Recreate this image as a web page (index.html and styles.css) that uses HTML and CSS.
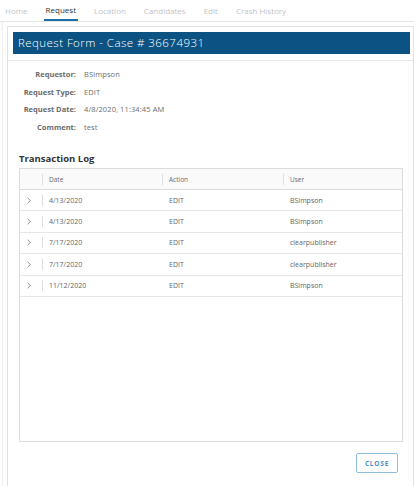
FILE: index.html
```html
<!DOCTYPE html>
<html>
	<head>
		<meta charset="UTF-8">
		<title>Request Form</title>
		<link rel="stylesheet" href="styles.css">
	</head>
	<body>
		<div class="tabs">
			<span class="tab">Home</span>
			<span class="tab active">Request</span>
			<span class="tab">Location</span>
			<span class="tab">Candidates</span>
			<span class="tab">Edit</span>
			<span class="tab">Crash History</span>
		</div>
		<div class="page">
			<div class="card">
				<div class="title">Request Form - Case # 36674931</div>
				<div class="content">
					<div class="form">
						<span class="label">Requestor:</span><span class="value">BSimpson</span>
						<span class="label">Request Type:</span><span class="value">EDIT</span>
						<span class="label">Request Date:</span><span class="value">4/8/2020, 11:34:45 AM</span>
						<span class="label">Comment:</span><span class="value">test</span>
					</div>
					<h3 class="log-title">Transaction Log</h3>
					<div class="grid">
						<div class="row head">
							<div class="cell exp"></div>
							<div class="cell sep">Date</div>
							<div class="cell sep">Action</div>
							<div class="cell sep">User</div>
						</div>
						<div class="row">
							<div class="cell exp"><svg width="6" height="7" viewBox="0 0 6 7"><polyline points="1.5,0.8 4.5,3.5 1.5,6.2" fill="none" stroke="#8a8a8a" stroke-width="0.9"/></svg></div>
							<div class="cell first">4/13/2020</div>
							<div class="cell">EDIT</div>
							<div class="cell">BSimpson</div>
						</div>
						<div class="row">
							<div class="cell exp"><svg width="6" height="7" viewBox="0 0 6 7"><polyline points="1.5,0.8 4.5,3.5 1.5,6.2" fill="none" stroke="#8a8a8a" stroke-width="0.9"/></svg></div>
							<div class="cell first">4/13/2020</div>
							<div class="cell">EDIT</div>
							<div class="cell">BSimpson</div>
						</div>
						<div class="row">
							<div class="cell exp"><svg width="6" height="7" viewBox="0 0 6 7"><polyline points="1.5,0.8 4.5,3.5 1.5,6.2" fill="none" stroke="#8a8a8a" stroke-width="0.9"/></svg></div>
							<div class="cell first">7/17/2020</div>
							<div class="cell">EDIT</div>
							<div class="cell">clearpublisher</div>
						</div>
						<div class="row">
							<div class="cell exp"><svg width="6" height="7" viewBox="0 0 6 7"><polyline points="1.5,0.8 4.5,3.5 1.5,6.2" fill="none" stroke="#8a8a8a" stroke-width="0.9"/></svg></div>
							<div class="cell first">7/17/2020</div>
							<div class="cell">EDIT</div>
							<div class="cell">clearpublisher</div>
						</div>
						<div class="row">
							<div class="cell exp"><svg width="6" height="7" viewBox="0 0 6 7"><polyline points="1.5,0.8 4.5,3.5 1.5,6.2" fill="none" stroke="#8a8a8a" stroke-width="0.9"/></svg></div>
							<div class="cell first">11/12/2020</div>
							<div class="cell">EDIT</div>
							<div class="cell">BSimpson</div>
						</div>
					</div>
					<div class="footer">
						<button class="close">CLOSE</button>
					</div>
				</div>
			</div>
		</div>
	</body>
</html>
```

FILE: styles.css
```css
body{
	margin: 0;
	font-family: "Open Sans", "Noto Sans", sans-serif;
	background: #fff;
	height: 486px;
	overflow: hidden;
}
.tabs{
	display: flex;
	gap: 14px;
	height: 21px;
	padding-left: 3px;
	border-bottom: 1px solid #e6e6e6;
}
.tab{
	padding: 0 2px;
	font-size: 8px;
	line-height: 21px;
	color: #c4c4c4;
	box-sizing: border-box;
	height: 21px;
}
.tab.active{
	color: #333;
	border-bottom: 2px solid #1b6fa8;
	line-height: 20px;
}
.page{
	margin-left: 2px;
	border-left: 1px solid #eee;
	padding-top: 4px;
	height: 470px;
}
.card{
	margin-left: 4px;
	width: 405px;
	border: 1px solid #e2e2e2;
	border-bottom: none;
	height: 480px;
}
.title{
	margin: 5px 3px 0 5px;
	height: 22px;
	background: #0c5383;
	color: #fff;
	font-size: 11.5px;
	font-weight: 300;
	line-height: 22px;
	padding-left: 5px;
	letter-spacing: 0.45px;
}
.content{
	margin-top: 6px;
	border-top: 1px solid #e8e8e8;
}
.form{
	display: grid;
	grid-template-columns: 68px 1fr;
	column-gap: 8px;
	grid-auto-rows: 17.5px;
	padding-top: 5px;
	font-size: 7.5px;
	line-height: 17.5px;
}
.label{
	text-align: right;
	font-weight: bold;
	color: #6b6b6b;
}
.value{
	color: #6e6e6e;
	letter-spacing: 0.1px;
}
.log-title{
	margin: 16px 0 2px 11px;
	font-size: 9.5px;
	line-height: 14px;
	font-weight: bold;
	color: #333;
}
.grid{
	margin-left: 11px;
	width: 382px;
	height: 272px;
	border: 1px solid #dcdcdc;
}
.row{
	display: grid;
	grid-template-columns: 22px 120px 121px 1fr;
	height: 20.4px;
	border-bottom: 1px solid #e6e6e6;
	font-size: 7px;
	color: #666;
	align-items: center;
}
.row.head{
	height: 20px;
	background: #fafafa;
	border-bottom: 1px solid #dcdcdc;
	font-size: 6.5px;
	color: #6a6a6a;
}
.cell{
	padding-left: 7px;
	height: 11px;
	line-height: 11px;
}
.cell.exp{
	padding-left: 6px;
	display: flex;
	align-items: center;
}
.cell.sep,
.cell.first{
	border-left: 1px solid #dedede;
	padding-left: 6px;
}
.footer{
	display: flex;
	justify-content: flex-end;
	padding: 11px 15px 0 0;
}
.close{
	width: 42px;
	height: 20px;
	padding: 0;
	background: #fff;
	border: 1px solid #8fbedc;
	border-radius: 2px;
	color: #4f90be;
	font-family: "Open Sans", "Noto Sans", sans-serif;
	font-size: 6.5px;
	font-weight: bold;
	letter-spacing: 0.8px;
}
```
